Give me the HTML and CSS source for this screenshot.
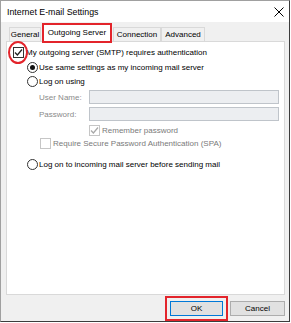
FILE: index.html
```html
<!DOCTYPE html>
<html>
<head>
<meta charset="utf-8">
<link rel="stylesheet" href="styles.css">
</head>
<body>
<div class="window">
  <div class="titlebar">
    <span class="title">Internet E-mail Settings</span>
    <svg class="close" width="10" height="10" viewBox="0 0 10 10"><path d="M0.5 0.5 L9.5 9.5 M9.5 0.5 L0.5 9.5" stroke="#000" stroke-width="1" fill="none"/></svg>
  </div>
  <div class="content">
    <div class="tabs">
      <div class="tab t-general">General</div>
      <div class="tab t-outgoing active">Outgoing Server</div>
      <div class="tab t-connection">Connection</div>
      <div class="tab t-advanced">Advanced</div>
    </div>
    <div class="panel">
      <span class="circle"></span>
      <div class="row r1">
        <span class="cb"><svg width="9" height="9" viewBox="0 0 9 9"><path d="M1 4.5 L3.4 7 L8 1.5" stroke="#222" stroke-width="1.3" fill="none"/></svg></span>
        <span>My outgoing server (SMTP) requires authentication</span>
      </div>
      <div class="row r2">
        <span class="radio on"><span class="dot"></span></span>
        <span>Use same settings as my incoming mail server</span>
      </div>
      <div class="row r3">
        <span class="radio"></span>
        <span>Log on using</span>
      </div>
      <div class="row r4">
        <span class="label">User Name:</span>
        <span class="field"></span>
      </div>
      <div class="row r5">
        <span class="label">Password:</span>
        <span class="field"></span>
      </div>
      <div class="row r6">
        <span class="cb dis"><svg width="9" height="9" viewBox="0 0 9 9"><path d="M1 4.5 L3.4 7 L8 1.5" stroke="#a8a8a8" stroke-width="1.3" fill="none"/></svg></span>
        <span class="distext">Remember password</span>
      </div>
      <div class="row r7">
        <span class="cb dis"></span>
        <span class="distext">Require Secure Password Authentication (SPA)</span>
      </div>
      <div class="row r8">
        <span class="radio"></span>
        <span>Log on to incoming mail server before sending mail</span>
      </div>
    </div>
    <div class="footer">
      <div class="btn ok">OK</div>
      <div class="btn cancel">Cancel</div>
    </div>
  </div>
</div>
</body>
</html>
```
FILE: styles.css
```css
* { box-sizing: border-box; }
body {
  margin: 0;
  background: #fff;
  font-family: "Liberation Sans", Arial, sans-serif;
  font-size: 8px;
  color: #000;
}
.window {
  width: 290px;
  height: 322px;
  border: 1px solid #a0a0a0;
  border-right-color: #3c3c3c;
  border-bottom-color: #3c3c3c;
  background: #f0f0f0;
  display: flex;
  flex-direction: column;
}
.titlebar {
  height: 21px;
  flex: none;
  background: #fff;
  display: flex;
  align-items: center;
  justify-content: space-between;
  padding: 0 5px 0 6px;
  font-size: 8.8px;
}
.close { display: block; }
.content {
  flex: 1;
  padding: 2px 4px 0 5px;
  display: flex;
  flex-direction: column;
}
.tabs {
  display: flex;
  align-items: flex-end;
  height: 17px;
  padding-left: 3px;
  position: relative;
  z-index: 1;
}
.tab {
  height: 14px;
  border: 1px solid #d9d9d9;
  border-bottom: none;
  background: #f0f0f0;
  display: flex;
  align-items: center;
  justify-content: center;
  white-space: nowrap;
}
.t-general { width: 32px; margin-right: 2px; }
.t-outgoing { width: 68px; margin-right: 2px; }
.t-connection { width: 48px; }
.t-advanced { width: 44px; }
.tab.active {
  height: 18px;
  margin-bottom: -1px;
  background: #fff;
  outline: 2px solid #e3242b;
  outline-offset: -1px;
  align-items: flex-start;
  padding-top: 3px;
}
.panel {
  height: 254px;
  flex: none;
  background: #fff;
  border: 1px solid #d9d9d9;
  position: relative;
  padding: 3px 5px 0 6px;
}
.circle {
  position: absolute;
  left: 1px;
  top: -1px;
  width: 20px;
  height: 23px;
  border: 2px solid #e3242b;
  border-radius: 50%;
}
.row {
  display: flex;
  align-items: center;
  height: 14px;
  white-space: nowrap;
}
.cb {
  width: 11px;
  height: 11px;
  border: 1px solid #333;
  background: #fff;
  margin-right: 2px;
  display: flex;
  align-items: center;
  justify-content: center;
  flex: none;
}
.cb svg { display: block; }
.cb.dis { border-color: #c6c6c6; }
.radio {
  width: 11px;
  height: 11px;
  border: 1px solid #333;
  border-radius: 50%;
  background: #fff;
  margin-left: 14px;
  margin-right: 1px;
  display: flex;
  align-items: center;
  justify-content: center;
  flex: none;
}
.dot {
  width: 5px;
  height: 5px;
  border-radius: 50%;
  background: #111;
}
.r2 { margin-top: 1px; }
.r4 { margin-top: 2px; }
.r5 { margin-top: 3px; }
.r6 { margin-top: 3px; height: 12px; }
.r7 { margin-top: 1px; height: 12px; }
.r8 { margin-top: 8px; }
.label {
  width: 50px;
  margin-left: 26px;
  color: #8a8a8a;
}
.field {
  width: 190px;
  height: 14px;
  background: #eceef1;
  border: 1px solid #bfc4ca;
}
.r6 .cb { margin-left: 76px; }
.r7 .cb { margin-left: 27px; }
.distext { color: #7a7a7a; }
.footer {
  display: flex;
  justify-content: flex-end;
  gap: 7px;
  margin-top: 6px;
}
.btn {
  height: 15px;
  border: 1px solid #adadad;
  background: #e1e1e1;
  display: flex;
  align-items: center;
  justify-content: center;
}
.ok {
  width: 53px;
  border-color: #0078d7;
  outline: 2px solid #e3242b;
  outline-offset: 3px;
}
.cancel { width: 55px; }
```
